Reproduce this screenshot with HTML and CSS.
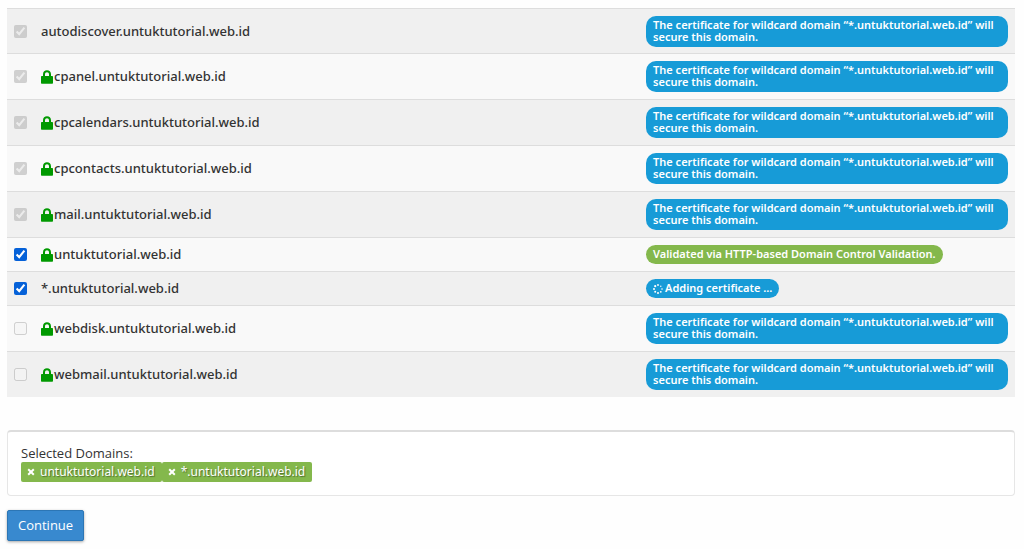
FILE: index.html
```html
<!DOCTYPE html>
<html lang="en">
<head>
<meta charset="utf-8">
<title>SSL/TLS Certificate Domains</title>
<link rel="stylesheet" href="styles.css">
</head>
<body>
<svg class="sprite" aria-hidden="true">
  <symbol id="lock" viewBox="0 0 12 14"><path fill-rule="evenodd" d="M1 6h1V4.300C2 1.900 3.700.3 6 .3s4 1.600 4 4V6h1c.6 0 1 .4 1 1v5.700c0 .6-.4 1-1 1H1c-.6 0-1-.4-1-1V7c0-.6.4-1 1-1zm3 0h4V4.400C8 3.100 7.200 2.300 6 2.300S4 3.100 4 4.400z"/></symbol>
  <symbol id="cross" viewBox="0 0 8 8"><path d="M1.200 1.200l5.600 5.600M6.800 1.200L1.200 6.800" fill="none" stroke="currentColor" stroke-width="2"/></symbol>
</svg>
<main>
  <table class="domains">
    <tbody>
      <tr>
        <td class="pick"><input type="checkbox" id="d1" checked disabled></td>
        <td class="name"><label for="d1">autodiscover.untuktutorial.web.id</label></td>
        <td class="status"><span class="badge info">The certificate for wildcard domain “*.untuktutorial.web.id” will secure this domain.</span></td>
      </tr>
      <tr>
        <td class="pick"><input type="checkbox" id="d2" checked disabled></td>
        <td class="name"><label for="d2"><svg class="lock"><use href="#lock"/></svg>cpanel.untuktutorial.web.id</label></td>
        <td class="status"><span class="badge info">The certificate for wildcard domain “*.untuktutorial.web.id” will secure this domain.</span></td>
      </tr>
      <tr>
        <td class="pick"><input type="checkbox" id="d3" checked disabled></td>
        <td class="name"><label for="d3"><svg class="lock"><use href="#lock"/></svg>cpcalendars.untuktutorial.web.id</label></td>
        <td class="status"><span class="badge info">The certificate for wildcard domain “*.untuktutorial.web.id” will secure this domain.</span></td>
      </tr>
      <tr>
        <td class="pick"><input type="checkbox" id="d4" checked disabled></td>
        <td class="name"><label for="d4"><svg class="lock"><use href="#lock"/></svg>cpcontacts.untuktutorial.web.id</label></td>
        <td class="status"><span class="badge info">The certificate for wildcard domain “*.untuktutorial.web.id” will secure this domain.</span></td>
      </tr>
      <tr>
        <td class="pick"><input type="checkbox" id="d5" checked disabled></td>
        <td class="name"><label for="d5"><svg class="lock"><use href="#lock"/></svg>mail.untuktutorial.web.id</label></td>
        <td class="status"><span class="badge info">The certificate for wildcard domain “*.untuktutorial.web.id” will secure this domain.</span></td>
      </tr>
      <tr>
        <td class="pick"><input type="checkbox" id="d6" checked></td>
        <td class="name"><label for="d6"><svg class="lock"><use href="#lock"/></svg>untuktutorial.web.id</label></td>
        <td class="status"><span class="badge success">Validated via HTTP-based Domain Control Validation.</span></td>
      </tr>
      <tr>
        <td class="pick"><input type="checkbox" id="d7" checked></td>
        <td class="name"><label for="d7">*.untuktutorial.web.id</label></td>
        <td class="status"><span class="badge info"><svg class="spinner" viewBox="0 0 10 10" aria-hidden="true"><circle cx="5" cy="1" r=".9"/><circle cx="7.800" cy="2.200" r=".7"/><circle cx="9" cy="5" r=".8"/><circle cx="7.800" cy="7.800" r=".9"/><circle cx="5" cy="9" r="1"/><circle cx="2.200" cy="7.800" r="1"/><circle cx="1" cy="5" r="1"/><circle cx="2.200" cy="2.200" r="1.100"/></svg>Adding certificate ...</span></td>
      </tr>
      <tr>
        <td class="pick"><input type="checkbox" id="d8" disabled></td>
        <td class="name"><label for="d8"><svg class="lock"><use href="#lock"/></svg>webdisk.untuktutorial.web.id</label></td>
        <td class="status"><span class="badge info">The certificate for wildcard domain “*.untuktutorial.web.id” will secure this domain.</span></td>
      </tr>
      <tr>
        <td class="pick"><input type="checkbox" id="d9" disabled></td>
        <td class="name"><label for="d9"><svg class="lock"><use href="#lock"/></svg>webmail.untuktutorial.web.id</label></td>
        <td class="status"><span class="badge info">The certificate for wildcard domain “*.untuktutorial.web.id” will secure this domain.</span></td>
      </tr>
    </tbody>
  </table>

  <section class="selected">
    <div class="selected-title">Selected Domains:</div>
    <div class="tags">
      <button type="button" class="tag"><svg class="cross"><use href="#cross"/></svg>untuktutorial.web.id</button>
      <button type="button" class="tag"><svg class="cross"><use href="#cross"/></svg>*.untuktutorial.web.id</button>
    </div>
  </section>

  <button type="button" class="continue">Continue</button>
</main>
</body>
</html>
```
FILE: styles.css
```css
* {
  box-sizing: border-box;
}

body {
  margin: 0;
  background: #fefefe;
  color: #333;
  font: 13px/18px "Open Sans", "Noto Sans", sans-serif;
}

.sprite {
  display: none;
}

main {
  padding: 8px 9px 8px 7px;
}

.domains {
  width: 100%;
  border-collapse: separate;
  border-spacing: 0;
  table-layout: fixed;
}

.domains tr {
  background: #f9f9f9;
}

.domains tr:nth-child(odd) {
  background: #f0f0f0;
}

.domains td {
  padding: 7px;
  border-top: 1px solid #ddd;
  vertical-align: middle;
}

.domains tr:first-child td {
  padding-bottom: 6px;
}

.domains .pick {
  width: 34px;
}

.domains .name {
  padding: 6px 7px 8px 0;
  font-family: "Noto Sans", "Open Sans", sans-serif;
  font-weight: 500;
}

.domains .status {
  width: 37.3%;
}

.pick input {
  display: block;
  width: 13px;
  height: 13px;
  margin: 0;
  accent-color: #0561d8;
}

.name label {
  display: flex;
  align-items: center;
}

.lock {
  width: 12px;
  height: 14px;
  margin: 3px 1px 0 0;
  fill: #090;
}

.badge {
  display: block;
  width: fit-content;
  padding: 3px 7px 4px;
  border-radius: 10px;
  color: #fff;
  font-family: "Noto Sans", "Open Sans", sans-serif;
  font-size: 11px;
  font-weight: 600;
  line-height: 12px;
}

.info {
  background: #179bd7;
}

.success {
  background: #84b84c;
}

.spinner {
  width: 10px;
  height: 10px;
  margin-right: 2px;
  fill: #fff;
  vertical-align: middle;
}

.selected {
  margin-top: 33px;
  padding: 12px 13px 13px;
  border: 1px solid #e6e6e6;
  border-top: 2px solid #ddd;
  border-radius: 4px;
  background: #fff;
}

.tags {
  display: flex;
}

.tag {
  display: flex;
  align-items: center;
  padding: 2px 7px 2px 6px;
  border: 0;
  border-radius: 2px;
  background: #84b84c;
  color: #fff;
  font: 12px/16px "Noto Sans", "Open Sans", sans-serif;
  text-shadow: 1px 1px 1px rgba(0, 0, 0, .4);
}

.cross {
  width: 8px;
  height: 8px;
  margin-right: 5px;
}

.continue {
  margin-top: 14px;
  padding: 5px 10px;
  border: 1px solid #2c76b5;
  border-radius: 2px;
  background: #3889cf;
  box-shadow: 0 1px 3px rgba(0, 0, 0, .35);
  color: #fff;
  font: 13px/19px "Open Sans", "Noto Sans", sans-serif;
}
```
